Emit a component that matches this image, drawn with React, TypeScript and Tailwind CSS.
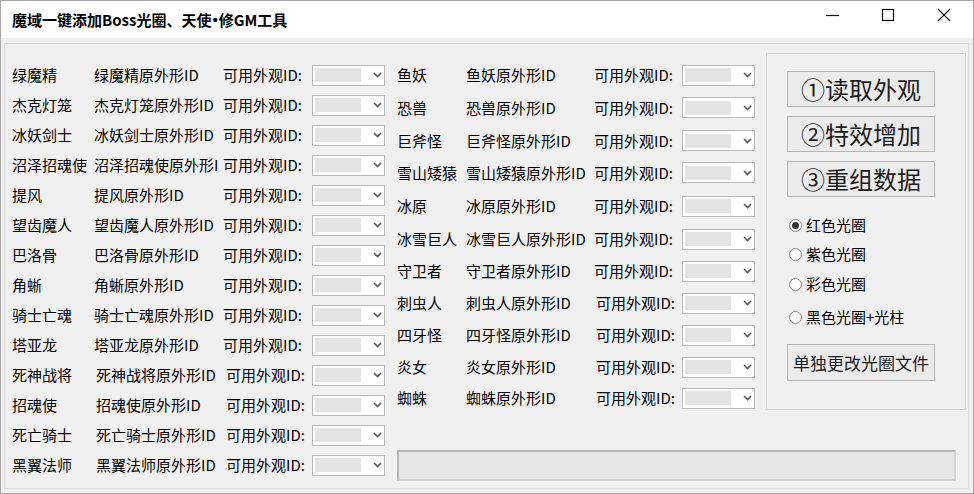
import React from "react";

type Row = { name: string; label: string; shift?: boolean; h?: string };

const leftRows: Row[] = [
  { name: "绿魔精", label: "绿魔精原外形ID" },
  { name: "杰克灯笼", label: "杰克灯笼原外形ID" },
  { name: "冰妖剑士", label: "冰妖剑士原外形ID" },
  { name: "沼泽招魂使", label: "沼泽招魂使原外形ID" },
  { name: "提风", label: "提风原外形ID" },
  { name: "望齿魔人", label: "望齿魔人原外形ID" },
  { name: "巴洛骨", label: "巴洛骨原外形ID" },
  { name: "角蜥", label: "角蜥原外形ID" },
  { name: "骑士亡魂", label: "骑士亡魂原外形ID" },
  { name: "塔亚龙", label: "塔亚龙原外形ID" },
  { name: "死神战将", label: "死神战将原外形ID", shift: true },
  { name: "招魂使", label: "招魂使原外形ID", shift: true },
  { name: "死亡骑士", label: "死亡骑士原外形ID", shift: true },
  { name: "黑翼法师", label: "黑翼法师原外形ID", shift: true },
];

const midRows: Row[] = [
  { name: "鱼妖", label: "鱼妖原外形ID", h: "h-[30px]" },
  { name: "恐兽", label: "恐兽原外形ID", h: "h-[35px]" },
  { name: "巨斧怪", label: "巨斧怪原外形ID", h: "h-[31px]" },
  { name: "雪山矮猿", label: "雪山矮猿原外形ID", h: "h-[33px]" },
  { name: "冰原", label: "冰原原外形ID", h: "h-[34px]" },
  { name: "冰雪巨人", label: "冰雪巨人原外形ID", h: "h-[32px]" },
  { name: "守卫者", label: "守卫者原外形ID", h: "h-[32px]" },
  { name: "刺虫人", label: "刺虫人原外形ID", shift: true, h: "h-[32px]" },
  { name: "四牙怪", label: "四牙怪原外形ID", shift: true, h: "h-[32px]" },
  { name: "炎女", label: "炎女原外形ID", shift: true, h: "h-[32px]" },
  { name: "蜘蛛", label: "蜘蛛原外形ID", shift: true, h: "h-[30px]" },
];

function Combo() {
  return (
    <div className="w-[73px] h-[21px] bg-white border border-[#b9b9b9] flex items-center shrink-0">
      <div className="ml-[2px] w-[46px] h-[14px] bg-[#e3e3e3]" />
      <svg className="ml-[12px]" width="9" height="6" viewBox="0 0 9 6">
        <path d="M1 1 L4.5 4.5 L8 1" fill="none" stroke="#5a5a5a" strokeWidth="1.6" />
      </svg>
    </div>
  );
}

function LeftRow({ r }: { r: Row }) {
  return (
    <div className="h-[30px] flex items-center text-[15px] leading-[20px] whitespace-nowrap">
      <div className="w-[82px] shrink-0">{r.name}</div>
      <div className={`w-[129px] shrink-0 ${r.shift ? "pl-[2px]" : ""}`}>
        <div className="w-[124px] overflow-hidden">{r.label}</div>
      </div>
      <div className={`w-[89px] shrink-0 ${r.shift ? "pl-[3px]" : ""}`}>可用外观ID:</div>
      <Combo />
    </div>
  );
}

function MidRow({ r }: { r: Row }) {
  return (
    <div className={`${r.h} flex items-center text-[15px] leading-[20px] whitespace-nowrap`}>
      <div className="w-[69px] shrink-0">{r.name}</div>
      <div className="w-[128px] shrink-0">{r.label}</div>
      <div className={`w-[88px] shrink-0 ${r.shift ? "pl-[2px]" : ""}`}>可用外观ID:</div>
      <Combo />
    </div>
  );
}

function Btn({ children, cls }: { children: React.ReactNode; cls: string }) {
  return (
    <div
      className={`w-[148px] bg-[#ebebeb] border border-[#b4b4b4] flex items-center justify-center text-[#1e1e1e] whitespace-nowrap ${cls}`}
    >
      {children}
    </div>
  );
}

function Radio({ label, checked, cls }: { label: string; checked?: boolean; cls: string }) {
  return (
    <div className={`h-[20px] flex items-center text-[15px] leading-[20px] ${cls}`}>
      <div className="ml-[2px] w-[13px] h-[13px] rounded-full border border-[#8a8a8a] bg-white flex items-center justify-center">
        {checked && <div className="w-[7px] h-[7px] rounded-full bg-[#333333]" />}
      </div>
      <span className="ml-[4px]">{label}</span>
    </div>
  );
}

export default function App() {
  return (
    <div className="w-[974px] h-[494px] flex flex-col bg-[#f0f0f0] border border-[#a6a6a6] overflow-hidden text-black font-['Noto_Sans_CJK_SC',sans-serif]">
      {/* title bar */}
      <div className="h-[37px] bg-white flex items-start shrink-0">
        <div className="h-full flex items-center pl-[11px] text-[15px] font-bold leading-[20px] whitespace-nowrap">
          魔域一键添加Boss光圈、天使<span className="font-['Liberation_Sans',sans-serif] px-[1px]">•</span>修GM工具
        </div>
        <div className="ml-auto mr-[1px] flex">
          <div className="w-[56px] h-[28px] flex items-center justify-center">
            <svg width="14" height="14" viewBox="0 0 14 14">
              <path d="M1 7.5 H14" stroke="#111" strokeWidth="1.2" />
            </svg>
          </div>
          <div className="w-[56px] h-[28px] flex items-center justify-center">
            <svg width="14" height="14" viewBox="0 0 14 14">
              <rect x="1.5" y="1.5" width="11" height="11" fill="none" stroke="#111" strokeWidth="1.2" />
            </svg>
          </div>
          <div className="w-[56px] h-[28px] flex items-center justify-center">
            <svg width="14" height="14" viewBox="0 0 14 14">
              <path d="M1 1 L13 13 M13 1 L1 13" stroke="#111" strokeWidth="1.2" />
            </svg>
          </div>
        </div>
      </div>

      {/* client */}
      <div className="flex-1 pt-[5px] pl-[3px] pr-[4px] pb-[4px]">
        <div className="h-full border border-[#d7d7d7] flex">
          {/* left column */}
          <div className="w-[385px] shrink-0 pt-[16px] pl-[7px] flex flex-col">
            {leftRows.map((r) => (
              <LeftRow key={r.name} r={r} />
            ))}
          </div>

          {/* right side */}
          <div className="flex-1 flex flex-col">
            <div className="flex">
              <div className="w-[376px] shrink-0 pt-[16px] pl-[7px] flex flex-col">
                {midRows.map((r) => (
                  <MidRow key={r.name} r={r} />
                ))}
              </div>
              <div className="mt-[9px] w-[200px] h-[357px] border border-[#d7d7d7] pl-[20px] pt-[17px] flex flex-col">
                <Btn cls="h-[36px] text-[24px] leading-[30px]">①读取外观</Btn>
                <Btn cls="h-[36px] mt-[9px] text-[24px] leading-[30px]">②特效增加</Btn>
                <Btn cls="h-[36px] mt-[9px] text-[24px] leading-[30px]">③重组数据</Btn>
                <Radio label="红色光圈" checked cls="mt-[18px]" />
                <Radio label="紫色光圈" cls="mt-[9px]" />
                <Radio label="彩色光圈" cls="mt-[10px]" />
                <Radio label="黑色光圈+光柱" cls="mt-[13px]" />
                <Btn cls="h-[37px] mt-[17px] text-[17px] leading-[24px]">单独更改光圈文件</Btn>
              </div>
            </div>
            <div className="mt-auto mb-[7px] ml-[7px] w-[559px] h-[31px] bg-[#e6e6e6] border-2 border-t-[#b5b5b5] border-l-[#b5b5b5] border-b-[#d5d5d5] border-r-[#d5d5d5]" />
          </div>
        </div>
      </div>
    </div>
  );
}
